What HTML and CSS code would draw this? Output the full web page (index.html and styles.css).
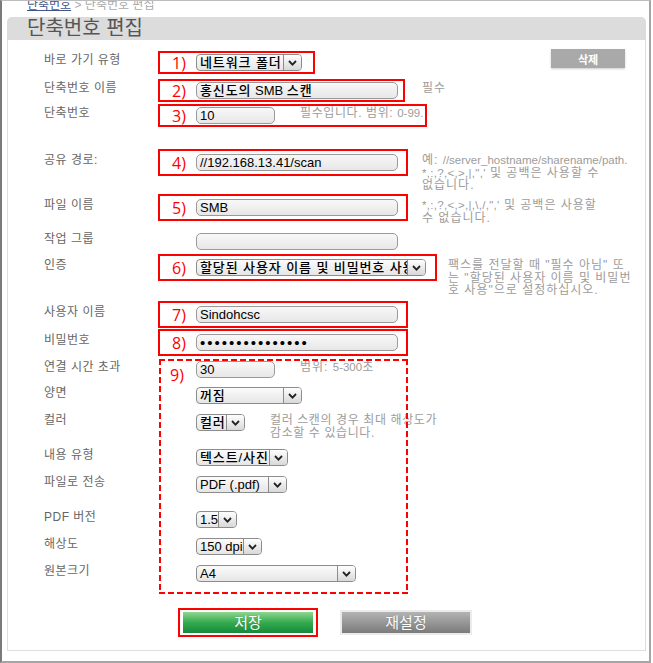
FILE: index.html
```html
<!DOCTYPE html>
<html lang="ko">
<head>
<meta charset="utf-8">
<title>단축번호 편집</title>
<link rel="stylesheet" href="styles.css">
</head>
<body>
<div class="frame">
  <div class="crumb"><a class="crumb-link">단축번호</a> &gt; 단축번호 편집</div>
  <div class="panel">
    <div class="title-bar">단축번호 편집</div>
    <div class="body">
      <div class="form">
        <div class="row h28">
          <div class="label">바로 가기 유형</div>
          <div class="field mark tight mw157"><span class="num">1)</span>
            <div class="select sw106"><span class="val ko">네트워크 폴더</span><span class="arrow"><svg width="9" height="6" viewBox="0 0 9 6"><path d="M1 1 L4.5 4.6 L8 1" fill="none" stroke="#222" stroke-width="1.8"/></svg></span></div>
          </div>
          <button class="btn-del">삭제</button>
        </div>
        <div class="row h25">
          <div class="label">단축번호 이름</div>
          <div class="field mark tight mw247"><span class="num">2)</span>
            <div class="input iw202"><span class="ko">홍신도의</span> SMB <span class="ko">스캔</span></div>
          </div>
          <div class="hint ml17">필수</div>
        </div>
        <div class="row h47">
          <div class="label">단축번호</div>
          <div class="field mark tight mw269"><span class="num">3)</span>
            <div class="input iw79">10</div>
            <div class="hint narrow ml25">필수입니다. 범위: <span class="en">0-99.</span></div>
          </div>
        </div>
        <div class="row h45">
          <div class="label">공유 경로:</div>
          <div class="field mark mw250"><span class="num">4)</span>
            <div class="input iw202">//192.168.13.41/scan</div>
          </div>
          <div class="hint ml14">예: <span class="en">//server_hostname/sharename/path.</span><br><span class="en punct">*,:,?,&lt;,&gt;,|,",'</span> 및 공백은 사용할 수<br>없습니다.</div>
        </div>
        <div class="row h34">
          <div class="label">파일 이름</div>
          <div class="field mark mw250"><span class="num">5)</span>
            <div class="input iw202">SMB</div>
          </div>
          <div class="hint ml14"><span class="en punct">*,:,?,&lt;,&gt;,|,\,/,",'</span> 및 공백은 사용할<br>수 없습니다.</div>
        </div>
        <div class="row h26">
          <div class="label">작업 그룹</div>
          <div class="field">
            <div class="input iw202"></div>
          </div>
        </div>
        <div class="row h47">
          <div class="label">인증</div>
          <div class="field mark mw279"><span class="num">6)</span>
            <div class="select sw230"><span class="val ko">할당된 사용자 이름 및 비밀번호 사용</span><span class="arrow"><svg width="9" height="6" viewBox="0 0 9 6"><path d="M1 1 L4.5 4.6 L8 1" fill="none" stroke="#222" stroke-width="1.8"/></svg></span></div>
          </div>
          <div class="hint ml11">팩스를 전달할 때 "필수 아님" 또<br>는 "할당된 사용자 이름 및 비밀번<br>호 사용"으로 설정하십시오.</div>
        </div>
        <div class="row h28">
          <div class="label">사용자 이름</div>
          <div class="field mark mw250"><span class="num">7)</span>
            <div class="input iw202">Sindohcsc</div>
          </div>
        </div>
        <div class="row h25">
          <div class="label">비밀번호</div>
          <div class="field mark mw250"><span class="num">8)</span>
            <div class="input iw202"><span class="dots">•••••••••••••••</span></div>
          </div>
        </div>

        <div class="group">
          <div class="dash"><span class="num">9)</span></div>
          <div class="row h26">
            <div class="label">연결 시간 초과</div>
            <div class="field">
              <div class="input iw79">30</div>
              <div class="hint ml25">범위: <span class="en">5-300</span>초</div>
            </div>
          </div>
          <div class="row h27">
            <div class="label">양면</div>
            <div class="field">
              <div class="select sw106"><span class="val ko">꺼짐</span><span class="arrow"><svg width="9" height="6" viewBox="0 0 9 6"><path d="M1 1 L4.5 4.6 L8 1" fill="none" stroke="#222" stroke-width="1.8"/></svg></span></div>
            </div>
          </div>
          <div class="row h35">
            <div class="label">컬러</div>
            <div class="field">
              <div class="select sw49"><span class="val ko">컬러</span><span class="arrow"><svg width="9" height="6" viewBox="0 0 9 6"><path d="M1 1 L4.5 4.6 L8 1" fill="none" stroke="#222" stroke-width="1.8"/></svg></span></div>
              <div class="hint narrow ml25">컬러 스캔의 경우 최대 해상도가<br>감소할 수 있습니다.</div>
            </div>
          </div>
          <div class="row h27">
            <div class="label">내용 유형</div>
            <div class="field">
              <div class="select sw92"><span class="val ko">텍스트/사진</span><span class="arrow"><svg width="9" height="6" viewBox="0 0 9 6"><path d="M1 1 L4.5 4.6 L8 1" fill="none" stroke="#222" stroke-width="1.8"/></svg></span></div>
            </div>
          </div>
          <div class="row h35">
            <div class="label">파일로 전송</div>
            <div class="field">
              <div class="select sw91"><span class="val">PDF (.pdf)</span><span class="arrow"><svg width="9" height="6" viewBox="0 0 9 6"><path d="M1 1 L4.5 4.6 L8 1" fill="none" stroke="#222" stroke-width="1.8"/></svg></span></div>
            </div>
          </div>
          <div class="row h27">
            <div class="label">PDF 버전</div>
            <div class="field">
              <div class="select sw41"><span class="val">1.5</span><span class="arrow"><svg width="9" height="6" viewBox="0 0 9 6"><path d="M1 1 L4.5 4.6 L8 1" fill="none" stroke="#222" stroke-width="1.8"/></svg></span></div>
            </div>
          </div>
          <div class="row h27">
            <div class="label">해상도</div>
            <div class="field">
              <div class="select sw66"><span class="val">150 dpi</span><span class="arrow"><svg width="9" height="6" viewBox="0 0 9 6"><path d="M1 1 L4.5 4.6 L8 1" fill="none" stroke="#222" stroke-width="1.8"/></svg></span></div>
            </div>
          </div>
          <div class="row h29">
            <div class="label">원본크기</div>
            <div class="field">
              <div class="select sw160"><span class="val">A4</span><span class="arrow"><svg width="9" height="6" viewBox="0 0 9 6"><path d="M1 1 L4.5 4.6 L8 1" fill="none" stroke="#222" stroke-width="1.8"/></svg></span></div>
            </div>
          </div>
        </div>

        <div class="actions">
          <div class="save-mark"><button class="btn btn-save">저장</button></div>
          <button class="btn btn-reset">재설정</button>
        </div>
      </div>
    </div>
  </div>
</div>
</body>
</html>
```
FILE: styles.css
```css
* { box-sizing: border-box; }
html, body { margin: 0; padding: 0; background: #fff; }
body { font-family: "Liberation Sans", "Noto Sans CJK KR", sans-serif; }

.frame {
  width: 651px;
  height: 663px;
  border-top: 1px solid #bdbdbd;
  border-left: 2px solid #7a7a7a;
  border-right: 2px solid #a6a6a6;
  border-bottom: 2px solid #a6a6a6;
}

.crumb {
  height: 16px;
  padding-left: 25px;
  font-size: 12px;
  line-height: 9px;
  color: #aaa;
  white-space: nowrap;
  overflow: hidden;
}
.crumb-link { color: #44548a; text-decoration: underline; }

.panel { margin-left: 5px; width: 639px; }
.title-bar {
  height: 23px;
  background: #dcdcdc;
  border-radius: 5px 5px 0 0;
  padding-left: 20px;
  font-size: 20px;
  line-height: 23px;
  color: #555;
}
.body {
  height: 611px;
  border: 1px solid #dedede;
  border-top: none;
  padding: 14px 0 0 36px;
}

.row { display: flex; align-items: flex-start; }
.h25 { height: 25px; } .h26 { height: 26px; } .h27 { height: 27px; }
.h28 { height: 28px; } .h29 { height: 29px; } .h34 { height: 34px; }
.h35 { height: 35px; } .h45 { height: 45px; } .h47 { height: 47px; }

.label {
  flex: none;
  width: 114px;
  margin-top: -2px;
  font-size: 12px;
  line-height: 17px;
  letter-spacing: 0.5px;
  color: #666;
  white-space: nowrap;
}
.field { flex: none; display: flex; align-items: flex-start; padding-left: 38px; }
.mark { border: 2px solid #f00; padding: 3px 0 3px 12px; margin: -5px 0; }
.mark.tight { padding-top: 1px; padding-bottom: 1px; margin: -3px 0; }
.mw157 { width: 157px; } .mw247 { width: 247px; } .mw250 { width: 250px; }
.mw269 { width: 269px; } .mw279 { width: 279px; }

.num {
  flex: none;
  display: block;
  width: 24px;
  font-family: "Open Sans", sans-serif;
  font-size: 16px;
  line-height: 17px;
  color: #f00;
  position: relative;
  top: 1px;
}

.input {
  flex: none;
  height: 17px;
  border: 1px solid #9a9a9a;
  border-radius: 5px;
  background: linear-gradient(#f8f8f8, #e7e7e7);
  padding: 0 3px;
  font-size: 13px;
  line-height: 15px;
  color: #000;
  white-space: nowrap;
  overflow: hidden;
}
.ko { letter-spacing: 0.9px; font-weight: 500; }
.iw79 { width: 79px; } .iw202 { width: 202px; }
.dots { font-size: 15px; letter-spacing: 2px; }

.select {
  flex: none;
  display: flex;
  height: 17px;
  border: 1px solid #8c8c8c;
  border-radius: 4px;
  background: linear-gradient(#fbfbfb, #e6e6e6);
  overflow: hidden;
}
.select .val {
  flex: 1;
  min-width: 0;
  padding-left: 3px;
  font-size: 13px;
  line-height: 15px;
  color: #000;
  white-space: nowrap;
  overflow: hidden;
}
.select .arrow {
  flex: none;
  width: 18px;
  border-left: 1px solid #8c8c8c;
  background: linear-gradient(#ffffff, #d8d8d8);
  display: flex;
  align-items: center;
  justify-content: center;
}
.sw41 { width: 41px; } .sw49 { width: 49px; } .sw66 { width: 66px; }
.sw91 { width: 91px; } .sw92 { width: 92px; } .sw106 { width: 106px; }
.sw160 { width: 160px; } .sw230 { width: 230px; }

.hint {
  flex: none;
  font-size: 12px;
  line-height: 12.5px;
  letter-spacing: 1px;
  color: #9c9c9c;
  white-space: nowrap;
}
.hint.narrow { letter-spacing: 0.6px; }
.hint .en { font-size: 11.5px; letter-spacing: 0; }
.hint .en.punct { letter-spacing: 0.3px; }
.ml11 { margin-left: 11px; } .ml14 { margin-left: 14px; }
.ml17 { margin-left: 17px; } .ml25 { margin-left: 25px; }

.btn-del {
  margin-left: auto;
  margin-right: 20px;
  margin-top: -5px;
  width: 74px;
  height: 19px;
  padding: 0;
  border: none;
  background: #a9a9a9;
  box-shadow: 0 1px 2px rgba(0, 0, 0, 0.2);
  color: #fff;
  font-family: inherit;
  font-size: 11px;
  font-weight: bold;
}

.group { position: relative; padding-top: 2px; }
.dash {
  position: absolute;
  left: 115px;
  top: 0;
  width: 249px;
  bottom: 0;
  padding: 7px 0 0 11px;
  pointer-events: none;
  background:
    linear-gradient(90deg, #f00 6px, transparent 0) top left / 9px 2px repeat-x,
    linear-gradient(90deg, #f00 6px, transparent 0) bottom left / 9px 2px repeat-x,
    linear-gradient(#f00 6px, transparent 0) top left / 2px 9px repeat-y,
    linear-gradient(#f00 6px, transparent 0) top right / 2px 9px repeat-y;
}

.actions {
  display: flex;
  align-items: flex-start;
  gap: 24px;
  margin-top: 14px;
  padding-left: 134px;
}
.save-mark { border: 2px solid #f00; padding: 2px 3px; }
.btn {
  display: block;
  height: 21px;
  padding: 0;
  border: none;
  color: #fff;
  font-family: inherit;
  font-size: 15px;
  line-height: 21px;
  text-align: center;
  text-shadow: 0 0 1px rgba(0, 0, 0, 0.3);
}
.btn-save {
  width: 130px;
  background: linear-gradient(#8fd58f, #35ab4f 50%, #15893a);
}
.btn-reset {
  width: 128px;
  margin-top: 4px;
  background: linear-gradient(#b3b3b3, #7b7b7b);
  box-shadow: 0 0 0 2px #ebebeb;
}
```
